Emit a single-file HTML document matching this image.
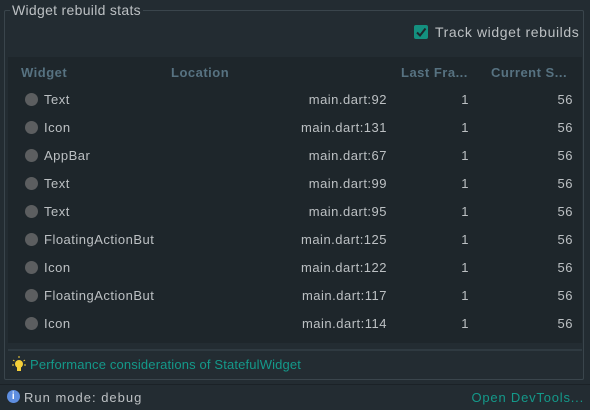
<!DOCTYPE html>
<html><head><style>
body{margin:0;width:590px;height:410px;background:#232c32;font-family:"Liberation Sans",sans-serif;font-size:13px;color:#bcc0c3;position:relative;overflow:hidden;letter-spacing:0.5px}
.abs{position:absolute;white-space:nowrap}
.fs{position:absolute;left:4px;top:10px;width:580px;height:370px;border:1px solid #3a454c;border-radius:2px;box-sizing:border-box}
.lg{position:absolute;left:10px;top:2px;background:#232c32;padding:0 2px;font-size:14px;letter-spacing:0.3px}
.tbl{position:absolute;left:8px;top:57px;width:574px;height:286px;background:#1e262b}
.h{font-weight:bold;color:#577281;top:65px}
.dot{position:absolute;width:13px;height:13px;border-radius:50%;background:#5c5e60}
.sep{position:absolute;left:8px;top:349px;width:574px;height:2px;background:#2f3a41}
.teal{color:#14998a}
</style></head><body>
<div class="fs"></div>
<div class="abs lg" style="top:2px">Widget rebuild stats</div>
<div class="abs" style="left:414px;top:25px;width:14px;height:14px;background:#14907f;border-radius:2px"><svg width="14" height="14"><path d="M3 7.5 L6 10.5 L11.5 3.5" stroke="#1e262b" stroke-width="2" fill="none"/></svg></div>
<div class="abs" style="left:435px;top:24px;font-size:14px;letter-spacing:0.6px">Track widget rebuilds</div>
<div class="tbl"></div>
<div class="abs h" style="left:21px">Widget</div>
<div class="abs h" style="left:171px">Location</div>
<div class="abs h" style="left:401px">Last Fra...</div>
<div class="abs h" style="left:491px">Current S...</div>
<div id="rows"></div>
<div class="sep"></div>
<svg class="abs" style="left:11px;top:355px" width="16" height="18"><g stroke="#f5d03a" stroke-width="1"><path d="M8 1v2M2 5l1.5 1M14 5l-1.5 1M1 10h2M13 10h2"/></g><circle cx="8" cy="9" r="4" fill="#f5d03a"/><rect x="6" y="12" width="4" height="4" fill="#f5d03a"/></svg>
<div class="abs teal" style="left:30px;top:357px;letter-spacing:0.15px">Performance considerations of StatefulWidget</div>
<div class="abs" style="left:0;top:384px;width:590px;height:1px;background:#1b2227"></div>
<div class="abs" style="left:7px;top:390px;width:13px;height:13px;border-radius:50%;background:#5e8ee0;color:#fff;font-size:10px;font-weight:bold;text-align:center;line-height:13px">i</div>
<div class="abs" style="left:24px;top:390px;letter-spacing:1px">Run mode: debug</div>
<div class="abs teal" style="right:6px;top:390px;letter-spacing:0.8px">Open DevTools...</div>
<script>
var d=[["Text","92"],["Icon","131"],["AppBar","67"],["Text","99"],["Text","95"],["FloatingActionBut","125"],["Icon","122"],["FloatingActionBut","117"],["Icon","114"]];
var h="";d.forEach(function(r,i){var y=93+i*28;
h+='<div class="dot" style="left:25px;top:'+(y)+'px"></div>';
h+='<div class="abs" style="left:44px;top:'+(y-1)+'px;width:114px;overflow:hidden">'+r[0]+'</div>';
h+='<div class="abs" style="right:203px;top:'+(y-1)+'px">main.dart:'+r[1]+'</div>';
h+='<div class="abs" style="right:121px;top:'+(y-1)+'px">1</div>';
h+='<div class="abs" style="right:17px;top:'+(y-1)+'px">56</div>';});
document.getElementById("rows").innerHTML=h;
</script>
</body></html>
